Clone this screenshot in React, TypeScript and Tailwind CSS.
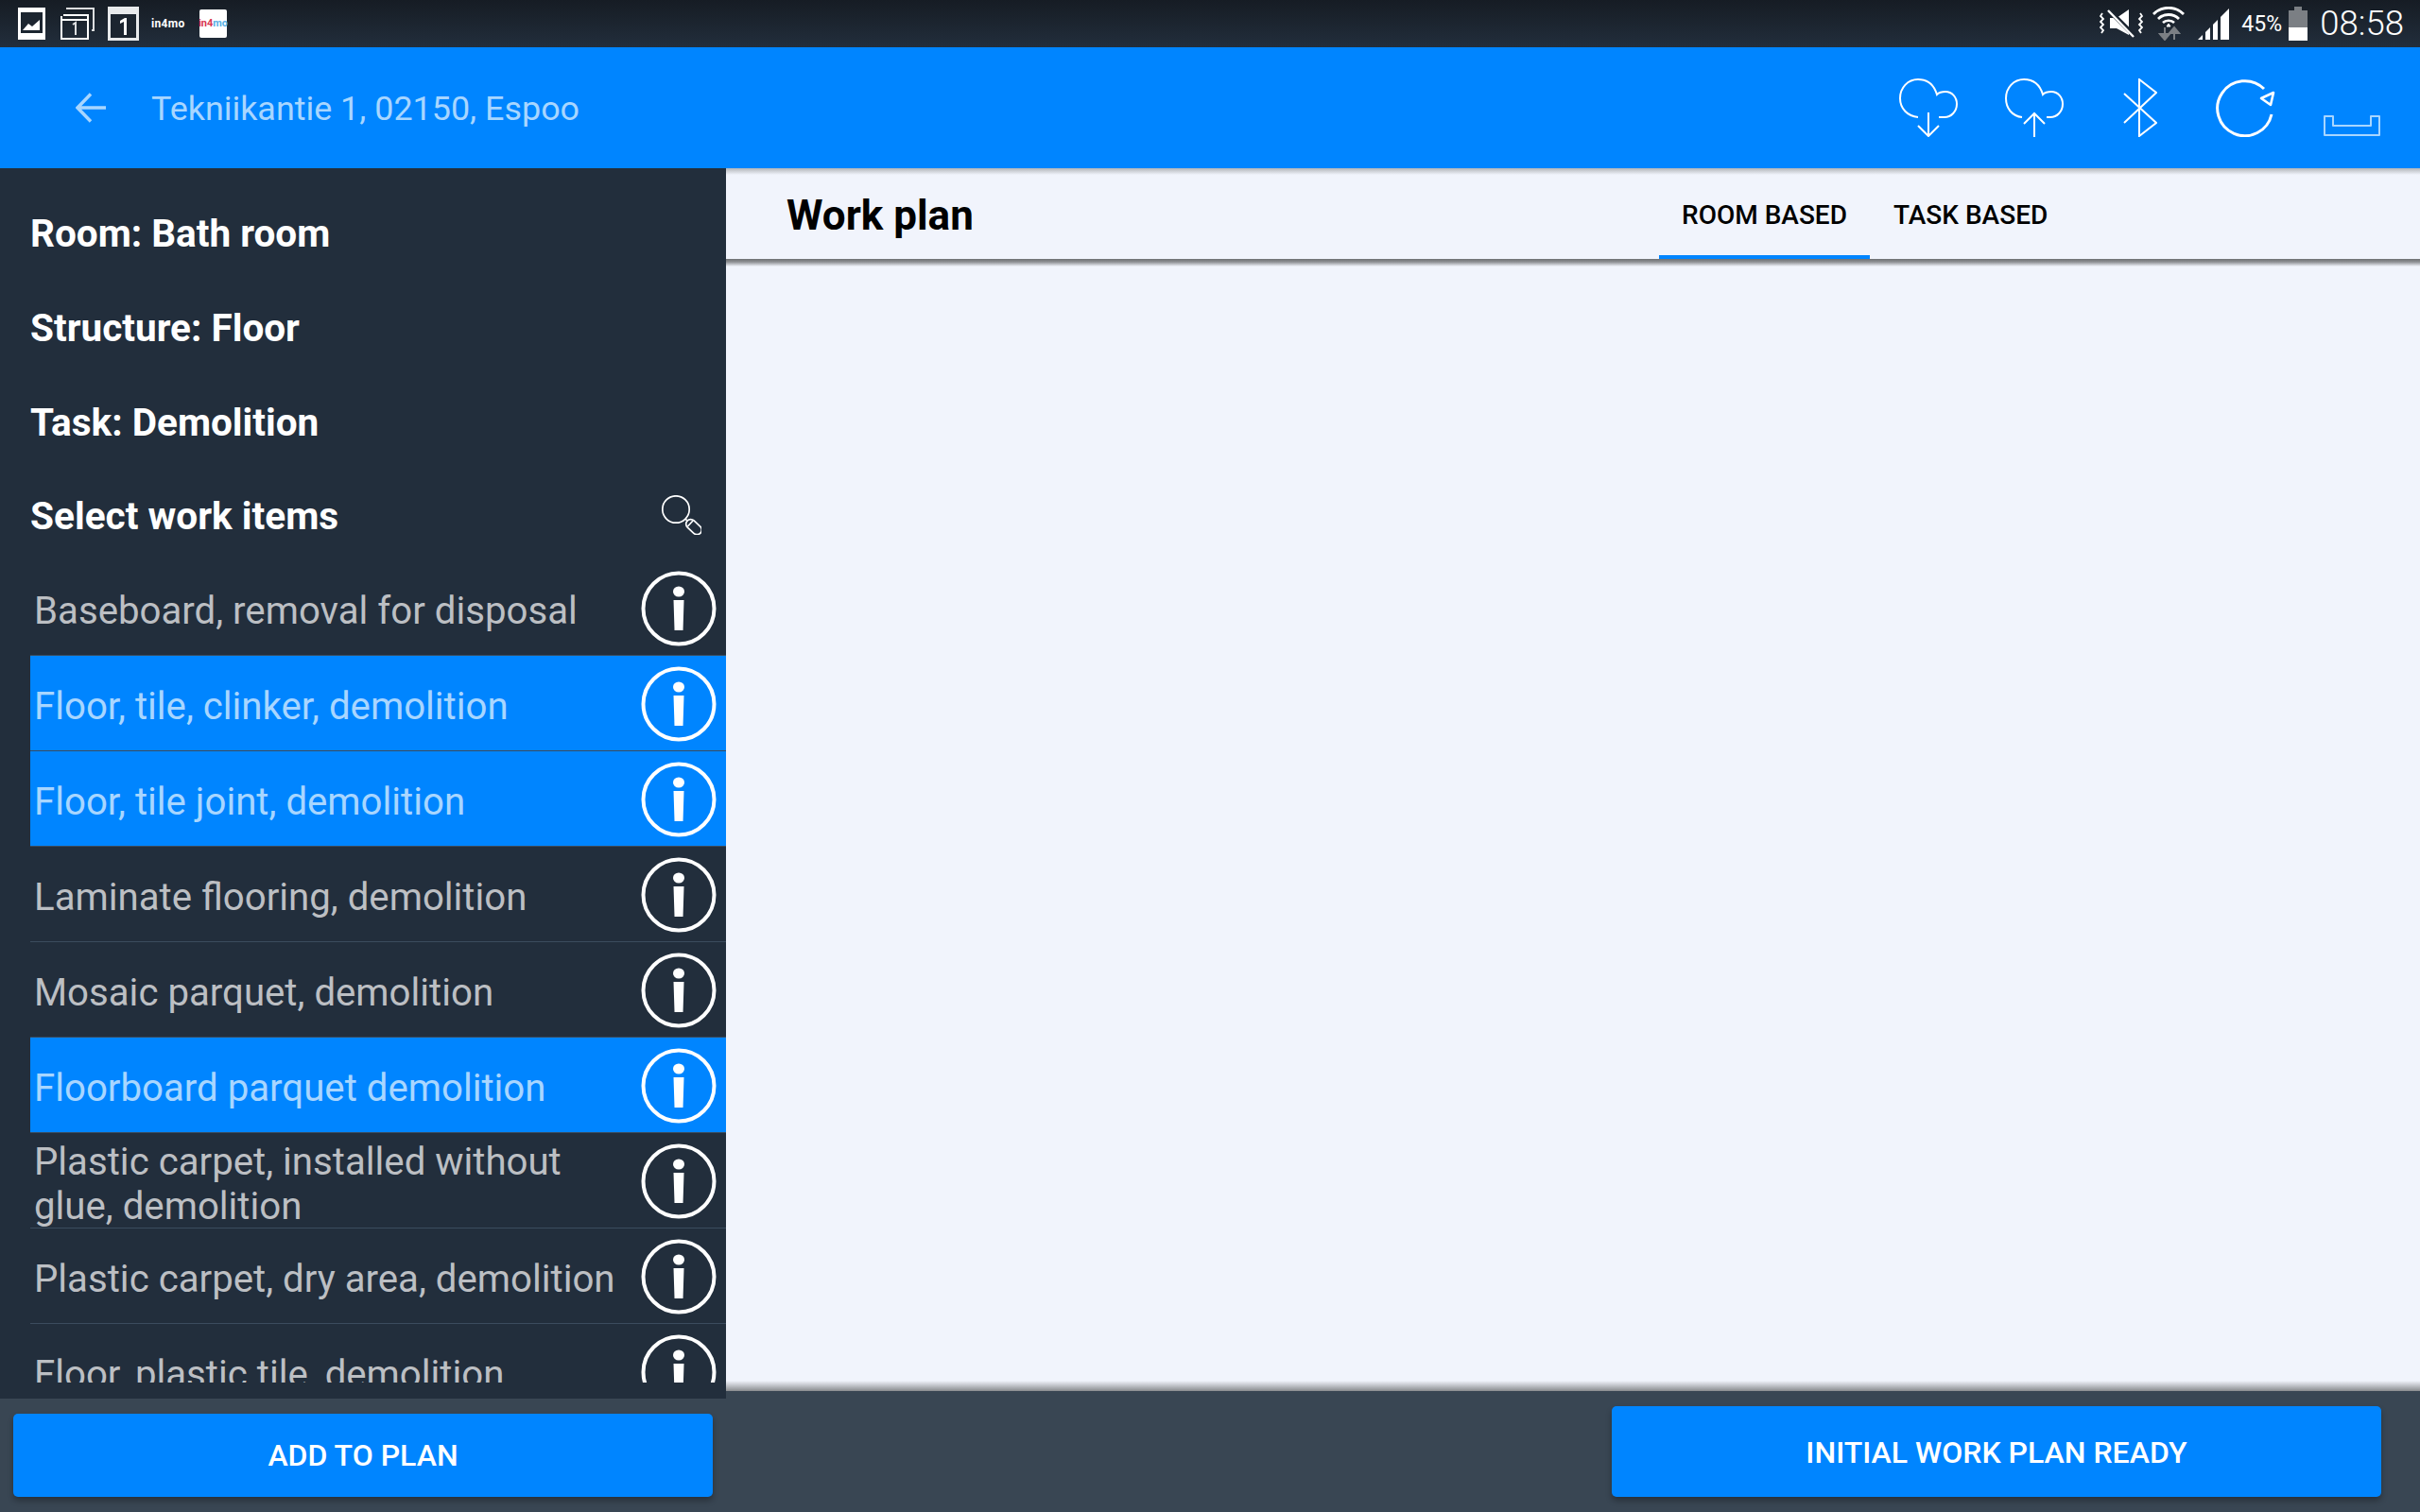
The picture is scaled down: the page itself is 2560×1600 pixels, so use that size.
import React from "react";

const roboto = "font-['Roboto',sans-serif]";

function InfoIcon() {
  return (
    <svg width="80" height="80" viewBox="0 0 80 80" className="mt-[1px] shrink-0">
      <circle cx="40" cy="40" r="37.5" fill="none" stroke="#fff" strokeWidth="4" />
      <ellipse cx="40" cy="22" rx="6" ry="5.5" fill="#fff" />
      <path d="M34.5 31H45.5L44.5 63H35.5Z" fill="#fff" />
    </svg>
  );
}

function CloudDown() {
  return (
    <svg width="62" height="62" viewBox="0 0 62 62" fill="none" stroke="#fff" strokeWidth="2">
      <path d="M20 41C9 40 1 32 1 21C1 10 9 1 20 1C30 1 37 7 40 17C43 14 47 14 49 14C56 14 61 20 61 27C61 35 55 41 48 41H42" />
      <path d="M31 36V61M20 50L31 61L42 50" />
    </svg>
  );
}

function CloudUp() {
  return (
    <svg width="62" height="62" viewBox="0 0 62 62" fill="none" stroke="#fff" strokeWidth="2">
      <path d="M18 41C8 40 1 32 1 21C1 10 9 1 20 1C30 1 37 7 40 17C43 14 47 14 49 14C56 14 61 20 61 27C61 35 55 41 48 41H44" />
      <path d="M31 62V37M20 48L31 37L42 48" />
    </svg>
  );
}

function Bluetooth() {
  return (
    <svg width="36" height="62" viewBox="0 0 36 62" fill="none" stroke="#fff" strokeWidth="2">
      <path d="M1 16L35 47L17 61V1L35 15L1 47" />
    </svg>
  );
}

function Refresh() {
  return (
    <svg width="64" height="62" viewBox="0 0 64 62" fill="none" stroke="#fff" strokeWidth="3" className="-ml-[2px]">
      <path d="M60 38A29 29 0 1 1 52 11" />
      <path d="M49 21L62 15L59 28Z" strokeWidth="2.6" strokeLinejoin="round" />
    </svg>
  );
}

function Dock() {
  return (
    <svg width="60" height="62" viewBox="0 0 60 62" fill="none" stroke="#a8d6ff" strokeWidth="2">
      <path d="M1 40H10V50H50V40H59V60H1Z" strokeLinejoin="round" />
    </svg>
  );
}

function SearchIcon() {
  return (
    <svg width="42" height="42" viewBox="0 0 42 42" fill="none" stroke="#fff" strokeWidth="1.7">
      <circle cx="15" cy="15" r="14.2" />
      <path d="M25 25L27.5 27.5" />
      <rect x="24.5" y="28.6" width="19" height="10" rx="5" transform="rotate(43 34 33.6)" />
      <path d="M33 27L27.5 33" />
    </svg>
  );
}

function StatusLeft() {
  return (
    <div className="flex items-center pl-[19px]">
      <svg width="29" height="34" viewBox="0 0 29 34" className="shrink-0">
        <rect width="29" height="34" fill="#fff" />
        <rect x="3" y="5" width="23" height="22" fill="#1c2530" />
        <path d="M5 24L11 17L15 20L23 13V24Z" fill="#fff" />
      </svg>
      <svg width="36" height="35" viewBox="0 0 36 35" fill="none" stroke="#fff" strokeWidth="2" className="ml-[16px] shrink-0">
        <path d="M6 1H35V24H33" strokeWidth="2" opacity="0.85" />
        <path d="M3 8H29V33H1V9" />
        <path d="M1 13H29" />
        <path d="M13 18L16 16V29" strokeWidth="2" opacity="0.85" />
      </svg>
      <svg width="33" height="36" viewBox="0 0 33 36" className="ml-[14px] shrink-0">
        <rect width="33" height="36" fill="#e8eaec" />
        <rect x="3" y="8" width="27" height="25" fill="#1c2530" />
        <path d="M13 15L18 12H20V30H17V16L13 18Z" fill="#fff" />
      </svg>
      <span className={`ml-[13px] w-[38px] ${roboto} text-[12px] leading-none font-bold tracking-[0.3px] text-white`}>in4mo</span>
      <span className={`ml-[13px] flex h-[30px] w-[29px] items-center justify-center rounded-[2px] bg-white ${roboto} text-[11px] font-bold`}>
        <span className="text-[#d8344f]">in4</span>
        <span className="text-[#58b0e4]">mo</span>
      </span>
    </div>
  );
}

function StatusRight() {
  return (
    <div className="flex items-center pr-[17px]">
      <svg width="46" height="30" viewBox="0 0 46 30" fill="none" className="shrink-0">
        <path d="M3 4L1 7L4 10L1 13L4 16L1 19L4 22L2 25" stroke="#fff" strokeWidth="1.8" />
        <path d="M43 4L45 7L42 10L45 13L42 16L45 19L42 22L44 25" stroke="#fff" strokeWidth="1.8" />
        <path d="M11 9H18L31 0V27L18 20H11Z" fill="#fff" />
        <path d="M10 1L37 28" stroke="#1c2530" strokeWidth="5" />
        <path d="M9 1L36 29" stroke="#fff" strokeWidth="2.4" />
      </svg>
      <svg width="34" height="36" viewBox="0 0 34 36" fill="none" className="ml-[10px] shrink-0">
        <path d="M1 8C10 -1 24 -1 33 8" stroke="#fff" strokeWidth="2.8" />
        <path d="M6 13C12 7 22 7 28 13" stroke="#fff" strokeWidth="2.8" />
        <path d="M11 17C14 14 20 14 23 17" stroke="#fff" strokeWidth="2.6" />
        <path d="M15 21L17 18L19 21Z" fill="#fff" stroke="#fff" />
        <path d="M13 22V30M8 29L13 35L18 29Z" fill="#7b7f84" stroke="#7b7f84" strokeWidth="2" />
        <path d="M23 35V27M18 28L23 22L28 28Z" fill="#7b7f84" stroke="#7b7f84" strokeWidth="2" />
      </svg>
      <svg width="33" height="33" viewBox="0 0 33 33" className="ml-[14px] shrink-0">
        <path d="M0 33L5 28V33Z" fill="#fff" />
        <path d="M8 25L13 20V33H8Z" fill="#fff" />
        <path d="M16 17L21 12V33H16Z" fill="#fff" />
        <path d="M24 9L33 0V33H24Z" fill="#fff" />
      </svg>
      <span className={`ml-[13px] w-[44px] ${roboto} text-[23px] leading-none whitespace-nowrap text-white`}>45%</span>
      <svg width="20" height="36" viewBox="0 0 20 36" className="ml-[6px] shrink-0">
        <path d="M6 0H14V4H20V22H0V4H6Z" fill="#7b7f84" />
        <rect y="22" width="20" height="14" fill="#fff" />
      </svg>
      <span className={`ml-[13px] ${roboto} text-[36.5px] leading-none font-light text-white`}>08:58</span>
    </div>
  );
}

const items: { label: React.ReactNode; sel?: boolean }[] = [
  { label: "Baseboard, removal for disposal" },
  { label: "Floor, tile, clinker, demolition", sel: true },
  { label: "Floor, tile joint, demolition", sel: true },
  { label: "Laminate flooring, demolition" },
  { label: "Mosaic parquet, demolition" },
  { label: "Floorboard parquet demolition", sel: true },
  { label: <>Plastic carpet, installed without<br />glue, demolition</> },
  { label: "Plastic carpet, dry area, demolition" },
  { label: "Floor, plastic tile, demolition" },
];

function Heading({ children }: { children: React.ReactNode }) {
  return (
    <div className="flex h-[100px] shrink-0 items-center pl-[32px] pr-[22px] pt-[3px]">
      <h2 className="flex-1 text-[40.5px] leading-none font-bold text-white">{children}</h2>
    </div>
  );
}

export default function App() {
  return (
    <div className={`flex h-[1600px] w-[2560px] flex-col overflow-hidden bg-[#394653] ${roboto}`}>
      <div className="flex h-[50px] shrink-0 items-center justify-between bg-gradient-to-b from-[#161c24] to-[#222e3c]">
        <StatusLeft />
        <StatusRight />
      </div>

      <div className="flex h-[128px] shrink-0 items-center bg-[#0085ff]">
        <svg width="32" height="32" viewBox="0 0 32 32" fill="none" stroke="#a8d6ff" strokeWidth="3.4" className="ml-[80px] shrink-0">
          <path d="M32 16H2M16 1.5L2 16L16 30.5" />
        </svg>
        <div className="ml-[48px] flex-1 pt-[4px] text-[35.9px] leading-none text-[#a8d6ff]">Tekniikantie 1, 02150, Espoo</div>
        <div className="flex items-center pr-[42px]">
          <CloudDown />
          <div className="ml-[50px]"><CloudUp /></div>
          <div className="ml-[63px]"><Bluetooth /></div>
          <div className="ml-[63px]"><Refresh /></div>
          <div className="ml-[51px]"><Dock /></div>
        </div>
      </div>

      <div className="flex min-h-0 flex-1">
        <div className="flex w-[768px] shrink-0 flex-col">
          <aside className="flex h-[1302px] shrink-0 flex-col bg-[#222e3c] pt-[18px] pb-[17px]">
            <Heading>Room: Bath room</Heading>
            <Heading>Structure: Floor</Heading>
            <Heading>Task: Demolition</Heading>
            <div className="flex h-[97px] shrink-0 items-center justify-between pl-[32px] pr-[26px] pt-[1px]">
              <h2 className="pt-[3px] text-[40.6px] leading-none font-bold text-white">Select work items</h2>
              <SearchIcon />
            </div>
            <div className="ml-[32px] min-h-0 flex-1 overflow-hidden">
              {items.map((it, i) => (
                <div
                  key={i}
                  className={`flex h-[101px] items-center border-b border-[#3b4c5e] pl-[4px] pr-[10px] ${it.sel ? "bg-[#0085ff] text-[#a8d6ff]" : "text-[#bcbfc3]"}`}
                >
                  <div className="flex-1 pt-[7px] text-[40.2px] leading-[47px]">{it.label}</div>
                  <InfoIcon />
                </div>
              ))}
            </div>
          </aside>
          <div className="flex-1 px-[14px] py-[16px]">
            <button className="flex h-[88px] w-full items-center justify-center rounded-[5px] bg-[#0085ff] text-[32px] font-medium text-white shadow-[0_4px_6px_rgba(0,0,0,0.3)]">
              ADD TO PLAN
            </button>
          </div>
        </div>

        <main className="flex min-w-0 flex-1 flex-col">
          <header className="flex h-[96px] shrink-0 bg-[#f1f4fc] bg-[linear-gradient(#b2b5b9,#f1f4fc_7px)]">
            <div className="flex w-[987px] shrink-0 items-center pl-[64px] pt-[4px]">
              <h1 className="text-[44px] leading-none font-bold text-black">Work plan</h1>
            </div>
            <div className="flex h-full w-[223px] items-center justify-center border-b-4 border-[#0085ff] pt-[8px] text-[28px] font-medium text-black">ROOM BASED</div>
            <div className="flex h-full items-center px-[25px] pt-[4px] text-[28px] font-medium text-black">TASK BASED</div>
          </header>
          <div className="flex-1 bg-[#f1f4fc] bg-[linear-gradient(#6f7173,#8b8d90_3px,#f1f4fc_8px)]">
            <div className="h-full bg-[linear-gradient(transparent_calc(100%-11px),#8a8c8f)]" />
          </div>
          <div className="flex h-[128px] shrink-0 items-start justify-end pt-[16px] pr-[41px]">
            <button className="flex h-[96px] w-[814px] items-center justify-center rounded-[5px] bg-[#0085ff] pt-[2px] text-[32px] font-medium text-white shadow-[0_4px_6px_rgba(0,0,0,0.3)]">
              INITIAL WORK PLAN READY
            </button>
          </div>
        </main>
      </div>
    </div>
  );
}
